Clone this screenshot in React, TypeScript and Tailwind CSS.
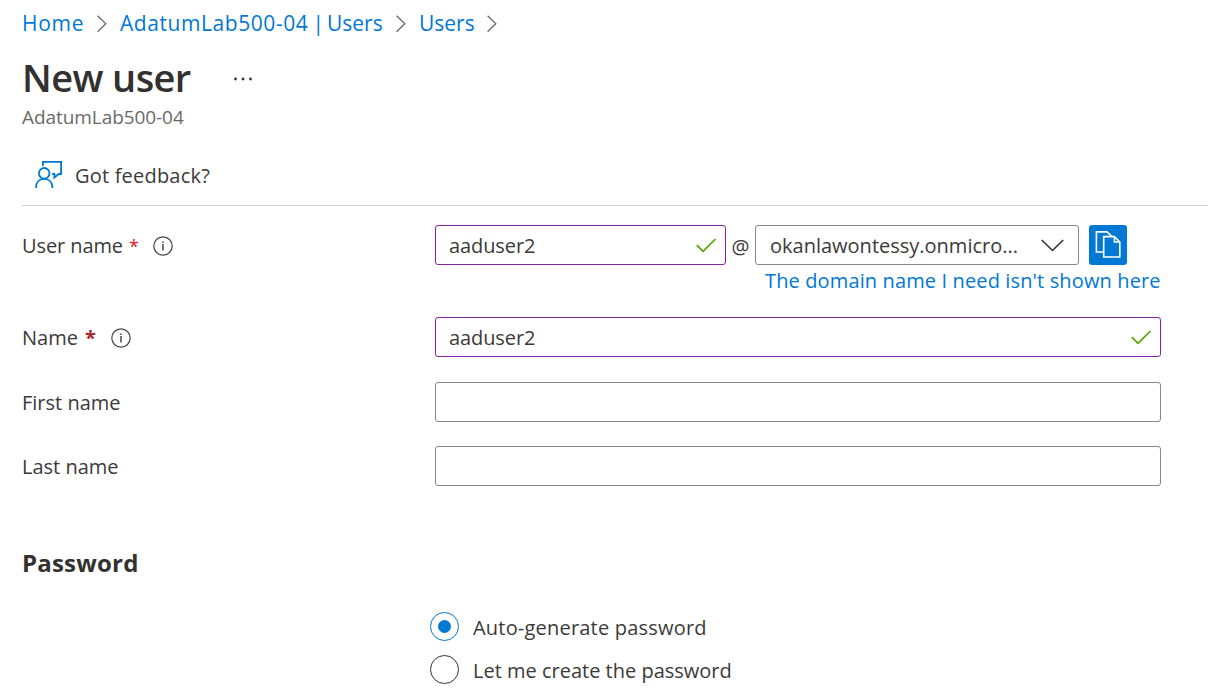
import React from "react";

function Chevron() {
  return (
    <svg className="h-[18px] w-[10px] shrink-0" viewBox="0 0 10 18" fill="none" stroke="#6b6967" strokeWidth="1.3">
      <path d="M0.6 0.8 L8.8 8.8 L0.6 16.8" />
    </svg>
  );
}

function Info() {
  return (
    <svg className="mt-px h-[20px] w-[20px] shrink-0" viewBox="0 0 20 20" fill="none" stroke="#484644" strokeWidth="1.2">
      <circle cx="10" cy="10" r="9.2" />
      <path d="M10 8v6.4" strokeWidth="1.5" />
      <path d="M10 5.4v1.6" strokeWidth="1.5" />
    </svg>
  );
}

function Check() {
  return (
    <svg className="h-[15px] w-[20px] shrink-0" viewBox="0 0 20 15" fill="none" stroke="#57a300" strokeWidth="1.7">
      <path d="M0.8 7.2 L7 13.4 L19.4 1" />
    </svg>
  );
}

function FeedbackIcon() {
  return (
    <svg className="h-[27px] w-[27px] shrink-0" viewBox="0 0 27 27" fill="none" stroke="#0078d4" strokeWidth="1.8">
      <circle cx="9.2" cy="12.3" r="5.3" />
      <path d="M0.9 27 C0.9 21.4 4.2 17.8 9.2 17.8 S17.5 21.4 17.5 27" />
      <path d="M7.9 5 V0.9 H26.1 V13 H23.6 L19.4 16.6 V13 H17.2" />
    </svg>
  );
}

function CopyIcon() {
  return (
    <svg className="h-[28px] w-[26px]" viewBox="0 0 26 28" fill="none" stroke="#fff" strokeWidth="1.6">
      <path d="M8.5 21 H1.4 V0.9 H12 L17 5.6" />
      <path d="M8.7 5.6 H19.4 L24.8 11 V26 H8.7 Z" />
      <path d="M19.4 5.6 V11 H24.8" />
    </svg>
  );
}

function Field({ label, value, className }: { label: string; value?: string; className: string }) {
  return (
    <div className={`flex h-10 items-center justify-between rounded-[3px] border pl-[13px] pr-[9px] ${className}`} aria-label={label}>
      {value && <span className="pt-px tracking-[-0.1px]">{value}</span>}
      {value && <Check />}
    </div>
  );
}

export default function App() {
  return (
    <main className="h-[695px] w-[1208px] overflow-hidden whitespace-nowrap bg-white pl-[22px] font-['Open_Sans','Noto_Sans',sans-serif] text-[20px] text-[#3b3a39]">
      <nav className="flex h-[48px] items-center text-[21px] text-[#0078d4]">
        <a className="w-[75px] tracking-[0.7px]">Home</a>
        <Chevron />
        <a className="ml-[13px] w-[276px]">
          <span className="tracking-[0.57px]">AdatumLab500-04</span>
          <span className="ml-[4px] mr-[3px]">|</span>
          <span>Users</span>
        </a>
        <Chevron />
        <a className="ml-[13px] w-[68px]">Users</a>
        <Chevron />
      </nav>

      <header className="h-[107px]">
        <div className="flex h-[56px] items-center pt-[4px]">
          <h1 className="w-[211px] pb-[2px] text-[38px] font-semibold leading-[50px] tracking-[-0.6px] text-[#323130]">New user</h1>
          <svg className="mt-px h-[4px] w-[20px]" viewBox="0 0 20 4" fill="#323130">
            <circle cx="2.5" cy="2" r="1.4" />
            <circle cx="10" cy="2" r="1.4" />
            <circle cx="17.5" cy="2" r="1.4" />
          </svg>
        </div>
        <p className="text-[19px] leading-[26px] tracking-[-0.07px] text-[#6b6967]">AdatumLab500-04</p>
      </header>

      <div className="flex h-[51px] items-center border-b border-[#d2d0ce] pb-[11px] pl-[13px]">
        <FeedbackIcon />
        <span className="ml-[13px] pt-[2px] tracking-[0.2px]">Got feedback?</span>
      </div>

      <section className="grid grid-cols-[413px_726px] pt-[19px]">
        <div className="flex h-10 items-center">
          <span className="pt-[2px] tracking-[-0.1px]">User name</span>
          <span className="ml-[6px] mr-[14px] pt-[2px] text-[18px] text-[#e81123]">*</span>
          <Info />
        </div>
        <div className="flex h-10 items-center">
          <Field label="User name" value="aaduser2" className="w-[291px] border-[#8a22a2]" />
          <span className="w-[29px] pt-[3px] text-center">@</span>
          <div className="flex h-10 w-[324px] items-center justify-between rounded-[3px] border border-[#8a8886] px-[14px]">
            <span className="pt-px">okanlawontessy.onmicro...</span>
            <svg className="h-[13px] w-[23px]" viewBox="0 0 23 13" fill="none" stroke="#323130" strokeWidth="1.6">
              <path d="M0.8 1 L11.5 11.5 L22.2 1" />
            </svg>
          </div>
          <button aria-label="Copy" className="ml-[10px] flex h-10 w-[38px] items-center justify-center rounded-[3px] bg-[#0078d4]">
            <CopyIcon />
          </button>
        </div>

        <a className="col-start-2 h-[52px] pl-[330px] leading-[32px] tracking-[0.13px] text-[#0078d4]">The domain name I need isn't shown here</a>

        <div className="flex h-10 items-center">
          <span className="pt-[2px]">Name</span>
          <span className="ml-[7px] mr-[15px] pt-[2px] font-bold text-[#a4262c]">*</span>
          <Info />
        </div>
        <Field label="Name" value="aaduser2" className="border-[#8a22a2]" />

        <div className="mt-[25px] flex h-10 items-center pt-[2px]">First name</div>
        <Field label="First name" className="mt-[25px] border-[#8a8886]" />

        <div className="mt-[24px] flex h-10 items-center pt-[2px]">Last name</div>
        <Field label="Last name" className="mt-[24px] border-[#8a8886]" />
      </section>

      <h2 className="mt-[59px] text-[24px] font-bold leading-[36px] tracking-[0.2px] text-[#323130]">Password</h2>

      <div className="mt-[31px] flex flex-col gap-[14px] pl-[408px]">
        <label className="flex h-[29px] items-center gap-[14px]">
          <span className="flex h-[29px] w-[29px] items-center justify-center rounded-full border border-[#0078d4]">
            <span className="h-[13px] w-[13px] rounded-full bg-[#0078d4]" />
          </span>
          <span className="pt-[2px] tracking-[0.2px]">Auto-generate password</span>
        </label>
        <label className="flex h-[29px] items-center gap-[14px]">
          <span className="h-[29px] w-[29px] rounded-full border border-[#323130]" />
          <span className="pt-[2px]">Let me create the password</span>
        </label>
      </div>
    </main>
  );
}
